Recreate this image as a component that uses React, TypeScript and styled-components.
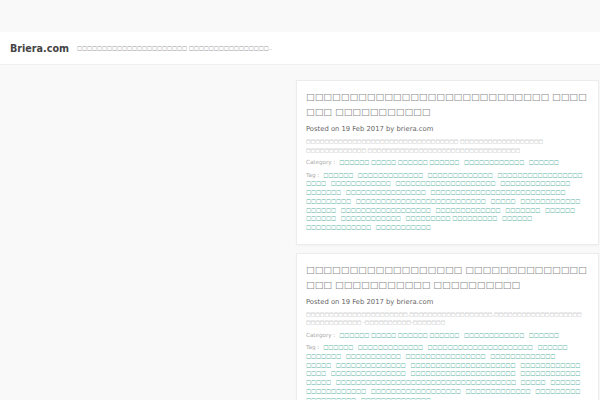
import React from "react";
import styled, { createGlobalStyle } from "styled-components";

const GlobalStyle = createGlobalStyle`
  html, body {
    margin: 0;
    padding: 0;
    background: #f9f9f9;
    font-family: "DejaVu Sans", sans-serif;
  }
`;

const TopSpace = styled.div`
  height: 32px;
  background: #f9f9f9;
`;

const Header = styled.header`
  height: 32px;
  background: #fff;
  border-bottom: 1px solid #efefef;
  display: flex;
  align-items: center;
  padding: 0 10px;
  gap: 8px;
`;

const Brand = styled.a`
  font-size: 9.6px;
  font-weight: bold;
  color: #444;
  text-decoration: none;
`;

const Tagline = styled.span`
  font-size: 5.3px;
  color: #999;
`;

const Layout = styled.div`
  display: grid;
  grid-template-columns: 288px 1fr;
  gap: 8px;
  padding: 15px 1px 0 0;
`;

const Sidebar = styled.aside``;

const Card = styled.article`
  background: #fff;
  border: 1px solid #ececec;
  box-shadow: 0 1px 2px rgba(0, 0, 0, 0.03);
  padding: 8px 9px 12px;
  margin-bottom: 8px;
`;

const Title = styled.h2`
  margin: 0;
  font-size: 9.2px;
  font-weight: normal;
  line-height: 15px;
  color: #888;
`;

const Meta = styled.div`
  font-size: 6.8px;
  color: #666;
  margin: 6px 0 4px;
`;

const Excerpt = styled.p`
  margin: 0 0 4px;
  font-size: 4.9px;
  line-height: 8.5px;
  color: #aaa;
`;

const TermRow = styled.div<{ $gap?: number }>`
  font-size: 5.3px;
  line-height: 8.7px;
  color: #aaa;
  margin-bottom: ${(p) => p.$gap ?? 4}px;
`;

const Label = styled.span`
  font-size: 5.6px;
  margin-right: 4px;
`;

const Term = styled.a`
  color: #5bb3a5;
  text-decoration: none;
  margin-right: 3px;
`;

// the site text shows as empty boxes, one per character
const w = (n: number) => "□".repeat(n);
const ws = (ns: number[]) => ns.map(w).join(" ");

type Post = {
  title: string;
  date: string;
  excerpt: string;
  categories: string[];
  tags: string[];
};

const categories = [ws([6, 5, 6, 6]), w(12), w(6)];

const posts: Post[] = [
  {
    title: ws([28, 4, 3, 11]),
    date: "19 Feb 2017",
    excerpt: ws([33, 18, 13, 33]),
    categories,
    tags: [
      6, 13, 13, 17, 4, 12, 20, 14, 7, 16, 27, 9, 26, 5, 12, 6, 18, 13, 7, 6,
      6, 12, 0, 6, 13, 11,
    ].map((n) => (n === 0 ? ws([9, 9]) : w(n))),
  },
  {
    title: ws([18, 14, 3, 11, 10]),
    date: "19 Feb 2017",
    excerpt: `${w(22)},${w(18)},${w(19)} ${w(12)} -${w(10)}-${w(7)}`,
    categories,
    tags: [
      6, 13, 21, 6, 7, 11, 16, 13, 5, 14, 21, 12, 4, 15, 21, 12, 5, 36, 5, 6,
      12, 18, 13, 9, 10, 14,
    ].map(w),
  },
];

const PostCard: React.FC<{ post: Post }> = ({ post }) => (
  <Card>
    <Title>{post.title}</Title>
    <Meta>Posted on {post.date} by briera.com</Meta>
    <Excerpt>{post.excerpt}</Excerpt>
    <TermRow $gap={4}>
      <Label>Category :</Label>
      {post.categories.map((c, i) => (
        <Term key={i}>{c} </Term>
      ))}
    </TermRow>
    <TermRow $gap={0}>
      <Label>Tag :</Label>
      {post.tags.map((t, i) => (
        <Term key={i}>{t} </Term>
      ))}
    </TermRow>
  </Card>
);

const App: React.FC = () => {
  return (
    <>
      <GlobalStyle />
      <TopSpace />
      <Header>
        <Brand href="#">Briera.com</Brand>
        <Tagline>{ws([22, 16])}..</Tagline>
      </Header>
      <Layout>
        <Sidebar />
        <main>
          {posts.map((p, i) => (
            <PostCard key={i} post={p} />
          ))}
        </main>
      </Layout>
    </>
  );
};

export default App;
